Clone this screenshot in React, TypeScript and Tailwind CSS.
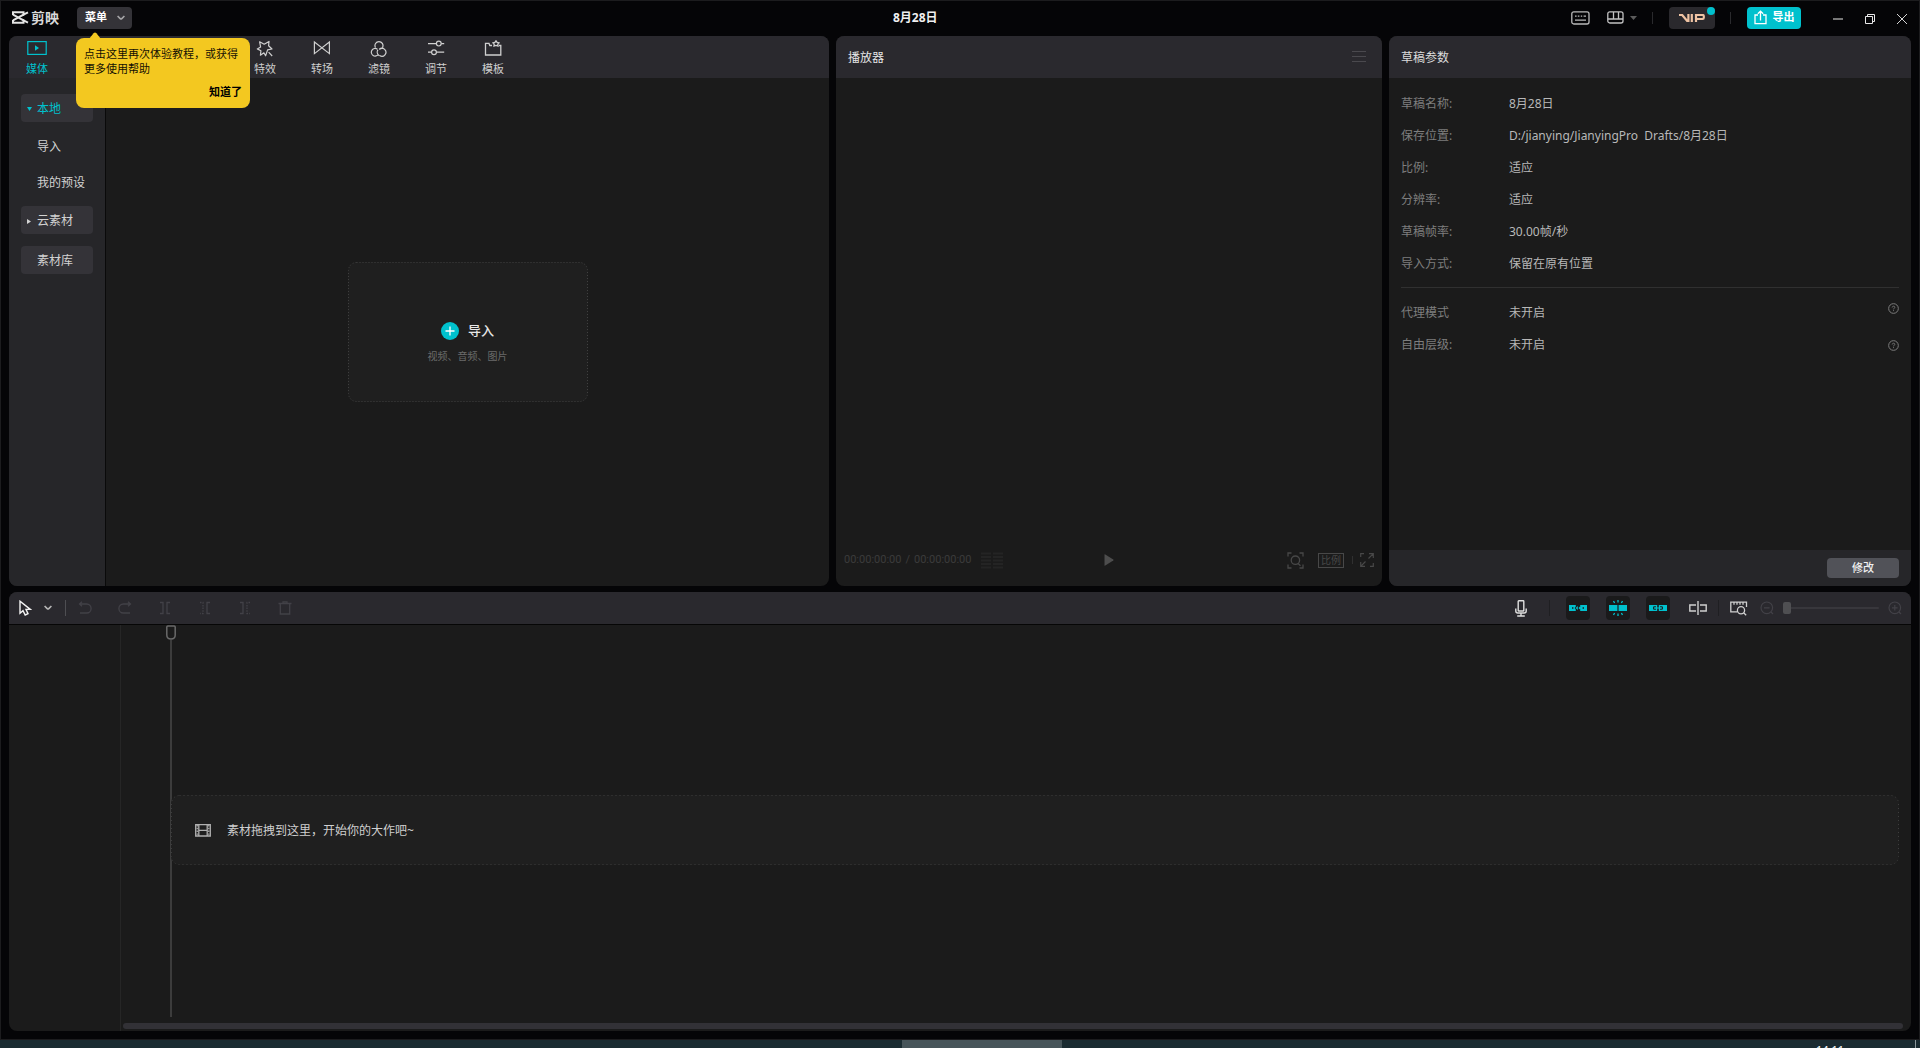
import type { ReactNode } from "react";

type IconProps = { className?: string };

const CapCutMark = () => (
  <svg width="17" height="13" viewBox="0 0 17 13" fill="none" stroke="#e4e4e4" strokeWidth="2">
    <path d="M1 4V1.2H11.5V3.6L16 1.4M1 9V11.8H11.5V9.4L16 11.6" />
    <path d="M1 3.6L12 9.6M1 9.4L12 3.4" />
  </svg>
);

const Chevron = ({ className }: IconProps) => (
  <svg className={className} width="8" height="6" viewBox="0 0 8 6" fill="none" stroke="currentColor" strokeWidth="1.6">
    <path d="M0.6 1L3.2 3.6Q4 4.3 4.8 3.6L7.4 1" />
  </svg>
);

const DottedFrame = ({ color, dash }: { color: string; dash: string }) => (
  <svg className="pointer-events-none absolute inset-0 size-full" fill="none" stroke={color} strokeDasharray={dash}>
    <rect x="0.5" y="0.5" rx="8" className="h-[calc(100%-1px)] w-[calc(100%-1px)]" />
  </svg>
);

const MediaIcon = () => (
  <svg width="20" height="16" viewBox="0 0 20 16" fill="none" stroke="currentColor" strokeWidth="1.2">
    <rect x="0.8" y="1.6" width="18.4" height="12.8" />
    <path d="M8 5.2V10.8L12 8Z" fill="currentColor" stroke="none" />
  </svg>
);
const EffectIcon = () => (
  <svg width="18" height="18" viewBox="0 0 18 18" fill="none" stroke="currentColor" strokeWidth="1.2" strokeLinejoin="round">
    <path d="M9.6 15.8L7.9 12.8L4.4 15.2L4.9 10.8L1.3 8.9L4.6 7L3.6 1.8L8.2 4.2L13 1.4L12.6 5.8L16 9L11.6 9.9L9.6 15.8Z" />
    <path d="M12.6 12.2L16.2 16" />
  </svg>
);
const TransitionIcon = () => (
  <svg width="18" height="16" viewBox="0 0 18 16" fill="none" stroke="currentColor" strokeWidth="1.2">
    <path d="M1.4 2L16.4 13.6V2L1.4 13.6Z" />
  </svg>
);
const FilterIcon = () => (
  <svg width="18" height="18" viewBox="0 0 18 18" fill="none" stroke="currentColor" strokeWidth="1.2">
    <path d="M5.4 7.4A4 4 0 1 1 12.6 7.3M7.9 9.8A4.3 4.3 0 0 0 9.3 15.7M7.4 9.2A3.8 3.8 0 1 0 8.4 14.2M9.2 9.3A4 4 0 1 1 9.6 15.6M9.2 9.3C10.6 9.1 12 8.4 12.6 7.3" />
  </svg>
);
const AdjustIcon = () => (
  <svg width="18" height="16" viewBox="0 0 18 16" fill="none" stroke="currentColor" strokeWidth="1.2">
    <path d="M1 3.6H9.3M14.3 3.6H17.2M1 12.2H4.5M9.5 12.2H17.2" />
    <circle cx="11.8" cy="3.6" r="2.4" />
    <circle cx="7" cy="12.2" r="2.4" />
  </svg>
);
const TemplateIcon = () => (
  <svg width="18" height="18" viewBox="0 0 18 18" fill="none" stroke="currentColor" strokeWidth="1.3">
    <path d="M8 5.5H5.8L5 3.4H1.5V15H16.8V5.5H15" />
    <path d="M12 0.8L13.1 2.4L15 2.8L13.8 4.3L14 6L12 5.4L10 6L10.2 4.3L9 2.8L10.9 2.4Z" />
  </svg>
);

const HelpIcon = () => (
  <svg width="11" height="11" viewBox="0 0 10 10" fill="none" stroke="#7c7c7c">
    <circle cx="5" cy="5" r="4.4" strokeWidth="0.9" />
    <path d="M3.8 4.1C3.8 2.5 6.3 2.6 6.2 4C6.1 4.8 5 4.8 5 5.8M5 6.5V7.4" strokeWidth="0.8" />
  </svg>
);

const tabs: { label: string; icon: ReactNode }[] = [
  { label: "特效", icon: <EffectIcon /> },
  { label: "转场", icon: <TransitionIcon /> },
  { label: "滤镜", icon: <FilterIcon /> },
  { label: "调节", icon: <AdjustIcon /> },
  { label: "模板", icon: <TemplateIcon /> },
];

const params = [
  ["草稿名称:", "8月28日"],
  ["保存位置:", "D:/jianying/JianyingPro  Drafts/8月28日"],
  ["比例:", "适应"],
  ["分辨率:", "适应"],
  ["草稿帧率:", "30.00帧/秒"],
  ["导入方式:", "保留在原有位置"],
];
const modes = [
  { name: "代理模式", value: "未开启", help: "self-start pt-[6px]" },
  { name: "自由层级:", value: "未开启", help: "self-center" },
];

const TitleBar = () => (
  <header className="relative z-10 flex h-[35px] shrink-0 items-center pr-3 pb-0.5 pl-[11px]">
    <div className="flex w-[65px] items-center gap-0.5">
      <CapCutMark />
      <span className="text-sm leading-4 font-bold text-[#d8d8d8]">剪映</span>
    </div>
    <div className="relative">
      <button className="flex h-[22px] w-[55px] items-center justify-between rounded bg-[#343338] pr-[7px] pl-2 text-[11px] font-bold text-white">
        菜单
        <Chevron className="text-[#a5a5a8]" />
      </button>
      <div className="absolute top-[31px] -left-px h-[70px] w-[174px] rounded-lg bg-[#f3c820] px-2 pt-2 text-[11px] leading-[15px] text-[#141003]">
        <svg className="absolute -top-[6px] left-[13px]" width="12" height="7" viewBox="0 0 12 7">
          <path d="M0 7L4.6 1.2Q6 -0.4 7.4 1.2L12 7Z" fill="#f3c820" />
        </svg>
        <p>点击这里再次体验教程，或获得更多使用帮助</p>
        <button className="mt-2 ml-auto block font-bold text-black">知道了</button>
      </div>
    </div>
    <h1 className="flex-1 pr-2 pl-[761px] text-xs leading-4 font-bold whitespace-nowrap text-[#f0f0f0]">8月28日</h1>
    <div className="flex items-center">
      <button aria-label="快捷键">
        <svg width="19" height="14" viewBox="0 0 19 14" fill="none" stroke="#b9b9b9" strokeWidth="1.3">
          <rect x="0.8" y="0.8" width="17.2" height="12.2" rx="2" />
          <path d="M4 5.2H5.6M6.8 5.2H8.4M9.8 5.2H11.2M12.6 5.2H15M4 9.2H15" />
        </svg>
      </button>
      <button aria-label="布局" className="ml-[17px] flex items-center gap-[6px]">
        <svg width="17" height="13" viewBox="0 0 17 13" fill="none" stroke="#c2c2c2" strokeWidth="1.3">
          <rect x="0.8" y="0.8" width="15.2" height="11.2" rx="2" />
          <path d="M0.8 8H16M6.5 1V8M11.5 1V8" />
        </svg>
        <svg width="7" height="4" viewBox="0 0 7 4">
          <path d="M0 0H7L3.5 4Z" fill="#5b5b5b" />
        </svg>
      </button>
      <span className="ml-[15px] h-3 w-px bg-[#2a2a2d]" />
      <button aria-label="VIP" className="relative ml-4 flex h-[22px] w-[46px] items-center justify-center rounded bg-[#2a292d]">
        <svg width="26" height="8" viewBox="0 0 26 8" fill="none" stroke="#efc3a3" strokeWidth="2.2">
          <path d="M0 1H3.2L8.2 7H9.4V0M12.8 0V8M17 8V1H23.8Q24.8 1 24.8 2.3V3.6Q24.8 5 23.6 5H18" />
        </svg>
        <span className="absolute top-0 right-0 size-2 rounded-full bg-[#00c1cd]" />
      </button>
      <span className="ml-[15px] h-3 w-px bg-[#2a2a2d]" />
      <button className="ml-4 flex h-[22px] w-[54px] items-center justify-center gap-[6px] rounded bg-[#00c1cd] text-[11px] font-bold text-white">
        <svg width="13" height="15" viewBox="0 0 13 15" fill="none" stroke="#fff" strokeWidth="1.3">
          <path d="M4 5H1V13.6H12V5H9M6.5 10.5V1.2M3.8 3.8L6.5 1.2L9.2 3.8" />
        </svg>
        导出
      </button>
      <button aria-label="最小化" className="ml-8 pt-[3px]">
        <svg width="10" height="2" viewBox="0 0 10 2">
          <path d="M0 0H10V2H0Z" fill="#777" />
        </svg>
      </button>
      <button aria-label="还原" className="ml-[22px] pt-[2px]">
        <svg width="10" height="10" viewBox="0 0 10 10" fill="none" stroke="#e8e8e8">
          <path d="M0.5 2.5H7.5V9.5H0.5ZM2.5 2.5V0.5H9.5V7.5H7.5" />
        </svg>
      </button>
      <button aria-label="关闭" className="ml-[22px] pt-[2px]">
        <svg width="10" height="10" viewBox="0 0 10 10" stroke="#d4d4d4">
          <path d="M0 0L10 10M10 0L0 10" />
        </svg>
      </button>
    </div>
  </header>
);

const MediaPanel = () => (
  <section className="flex flex-col overflow-hidden rounded-lg bg-[#1b1b1b]">
    <nav className="flex h-[42px] shrink-0 bg-[#2a292e] text-[11px] leading-4 text-[#cfcfcf]">
      <button className="mr-[171px] flex w-[57px] flex-col items-center pt-1 pr-px text-[#00c1cd]">
        <span className="flex h-[21px] items-start">
          <MediaIcon />
        </span>
        媒体
      </button>
      {tabs.map((t) => (
        <button key={t.label} className="flex w-[57px] flex-col items-center pt-1 pr-px">
          <span className="flex h-[21px] items-start">{t.icon}</span>
          {t.label}
        </button>
      ))}
    </nav>
    <div className="flex min-h-0 flex-1">
      <aside className="flex w-[97px] flex-col border-r border-[#0a0a0a] bg-[#262629] px-3 pt-4 text-xs text-[#d2d2d2]">
        <button className="flex h-7 items-center rounded bg-[#343338] pt-0.5 text-[#00c1cd]">
          <span className="flex w-4 justify-center">
            <svg width="5" height="4" viewBox="0 0 5 4">
              <path d="M0 0H5L2.5 4Z" fill="currentColor" />
            </svg>
          </span>
          本地
        </button>
        <div className="flex flex-col py-[6px]">
          <button className="h-9 pt-0.5 pl-4 text-left">导入</button>
          <button className="h-9 pt-0.5 pl-4 text-left whitespace-nowrap">我的预设</button>
        </div>
        <button className="flex h-7 items-center rounded bg-[#343338] pt-0.5">
          <span className="flex w-4 justify-center">
            <svg width="4" height="5" viewBox="0 0 4 5">
              <path d="M0 0V5L4 2.5Z" fill="currentColor" />
            </svg>
          </span>
          云素材
        </button>
        <button className="mt-3 h-7 rounded bg-[#343338] pt-0.5 pl-4 text-left">素材库</button>
      </aside>
      <div className="flex flex-1 items-center justify-center">
        <button className="relative flex h-[140px] w-60 flex-col items-center rounded-lg bg-[#1f1f1f] pt-15">
          <DottedFrame color="#404040" dash="1 2" />
          <span className="flex h-[18px] items-center gap-[9px] text-[13px] font-medium text-[#e6e6e6]">
            <svg width="18" height="18" viewBox="0 0 18 18">
              <circle cx="9" cy="9" r="9" fill="#00c1cd" />
              <path d="M4.5 9H13.5M9 4.5V13.5" stroke="#fff" strokeWidth="1.3" />
            </svg>
            导入
          </span>
          <span className="mt-2 text-[10px] leading-4 text-[#6b6b6b]">视频、音频、图片</span>
        </button>
      </div>
    </div>
  </section>
);

const PlayerPanel = () => (
  <section className="flex flex-col overflow-hidden rounded-lg bg-[#1b1b1b]">
    <div className="flex h-[42px] shrink-0 items-center justify-between bg-[#2a292e] pr-4 pl-3">
      <h2 className="pt-0.5 text-xs text-[#e6e6e6]">播放器</h2>
      <button aria-label="播放器菜单">
        <svg width="14" height="12" viewBox="0 0 14 12" stroke="#4a494e">
          <path d="M0 0.5H14M0 5.5H14M0 10.5H14" />
        </svg>
      </button>
    </div>
    <div className="flex-1" />
    <div className="grid h-[52px] grid-cols-[1fr_auto_1fr] items-center px-2 text-[#484848]">
      <div className="flex items-center font-[Roboto,sans-serif] text-[11px] text-[#3b3b3b]">
        <span>00:00:00:00</span>
        <span className="px-1">/</span>
        <span>00:00:00:00</span>
        <svg className="ml-2.5" width="22" height="17" viewBox="0 0 22 17" stroke="#242424" strokeWidth="2">
          <path d="M0 1.5H10M0 5H10M0 8.5H10M0 12H10M0 15.5H10M12 1.5H22M12 5H22M12 8.5H22M12 12H22M12 15.5H22" />
        </svg>
      </div>
      <button aria-label="播放">
        <svg width="10" height="12" viewBox="0 0 10 12">
          <path d="M0.5 0.8Q0.5 0 1.3 0.4L9.3 5.4Q10 6 9.3 6.6L1.3 11.6Q0.5 12 0.5 11.2Z" fill="#4d4d4d" />
        </svg>
      </button>
      <div className="flex items-center justify-end">
        <button aria-label="缩放">
          <svg width="17" height="17" viewBox="0 0 17 17" fill="none" stroke="currentColor" strokeWidth="1.3">
            <path d="M1 4.5V1H4.5M12.5 1H16V4.5M16 12.5V16H12.5M4.5 16H1V12.5M10.8 11.2L13.5 13.8" />
            <circle cx="8.4" cy="8.2" r="4.2" />
          </svg>
        </button>
        <button className="ml-3.5 h-[15px] w-[26px] border border-current text-center text-[10px] leading-[13px]">比例</button>
        <span className="mr-[7px] ml-2 h-2 w-px bg-[#303030]" />
        <button aria-label="全屏">
          <svg width="14" height="14" viewBox="0 0 14 14" fill="none" stroke="currentColor" strokeWidth="1.2">
            <path d="M0.7 4V0.7H4M9 0.7H13.3V5M13.3 10V13.3H10M5 13.3H0.7V9M0.7 13.3L5.5 8.5M13.3 0.7L8.5 5.5" />
          </svg>
        </button>
      </div>
    </div>
  </section>
);

const ParamsPanel = () => (
  <section className="flex flex-col overflow-hidden rounded-lg bg-[#1b1b1b]">
    <div className="flex h-[42px] shrink-0 items-center bg-[#2a292e] px-3">
      <h2 className="pt-0.5 text-xs text-[#dcdcdc]">草稿参数</h2>
    </div>
    <div className="flex-1 px-3 pt-2.5 text-xs">
      <dl>
        {params.map(([k, v]) => (
          <div key={k} className="flex h-8 items-center">
            <dt className="w-[108px] text-[#7e7e7e]">{k}</dt>
            <dd className="whitespace-pre text-[#b8b8b8]">{v}</dd>
          </div>
        ))}
      </dl>
      <hr className="mt-[7px] mb-[9px] border-[#303030]" />
      <dl>
        {modes.map((m) => (
          <div key={m.name} className="flex h-8 items-center">
            <dt className="w-[108px] text-[#7e7e7e]">{m.name}</dt>
            <dd className="flex h-full flex-1 items-center justify-between text-[#b8b8b8]">
              {m.value}
              <button aria-label={`${m.name}说明`} className={m.help}>
                <HelpIcon />
              </button>
            </dd>
          </div>
        ))}
      </dl>
    </div>
    <div className="flex h-9 shrink-0 items-center justify-end bg-[#262629] px-3">
      <button className="h-5 w-[72px] rounded bg-[#515258] text-[11px] font-medium text-[#f0f0f0]">修改</button>
    </div>
  </section>
);

const editTools: { label: string; icon: ReactNode }[] = [
  { label: "撤销", icon: <path d="M4 0.8L1.5 3L4 5.2M2 3H8.6A4.2 4.2 0 0 1 8.6 12H2" /> },
  { label: "重做", icon: <path d="M10 0.8L12.5 3L10 5.2M12 3H5.4A4.2 4.2 0 0 0 5.4 12H12" /> },
  { label: "分割", icon: <path d="M2 1.5H5V12.5H2M12 1.5H9V12.5H12" /> },
  {
    label: "向左裁剪",
    icon: (
      <>
        <path d="M12 1.5H9V12.5H12" />
        <path d="M2 1.5H5V12.5H2" strokeDasharray="1.5 1.2" />
      </>
    ),
  },
  {
    label: "向右裁剪",
    icon: (
      <>
        <path d="M2 1.5H5V12.5H2" />
        <path d="M12 1.5H9V12.5H12" strokeDasharray="1.5 1.2" />
      </>
    ),
  },
  { label: "删除", icon: <path d="M0.5 2.5H13.5M5 2.5V0.8H9V2.5M2.3 2.5V13H11.7V2.5" /> },
];

const Toggle = ({ label, children }: { label: string; children: ReactNode }) => (
  <button aria-label={label} aria-pressed="true" className="flex size-6 items-center justify-center rounded bg-[#1a1a1b]">
    <svg width="18" height="16" viewBox="0 0 18 16">
      {children}
    </svg>
  </button>
);

const Timeline = () => (
  <section className="flex min-h-0 flex-[439] flex-col overflow-hidden rounded-lg bg-[#1b1b1b]">
    <div className="flex h-[33px] shrink-0 items-center border-b border-[#060606] bg-[#2a292e] pr-[9px] pl-2.5">
      <button aria-label="选择" className="flex items-center gap-3">
        <svg width="13" height="16" viewBox="0 0 13 16" fill="none" stroke="#f2f2f2" strokeWidth="1.4">
          <path d="M1 1.2V13.2L4 10.6L6.2 15L9 13.7L7 9.4H11.3Z" />
        </svg>
        <Chevron className="text-[#b5b5b5]" />
      </button>
      <span className="ml-[13px] h-4 w-px bg-[#4e4e52]" />
      <div className="-ml-px flex">
        {editTools.map((t) => (
          <button key={t.label} aria-label={t.label} disabled className="flex w-10 justify-center text-[#424147]">
            <svg width="14" height="14" viewBox="0 0 14 14" fill="none" stroke="currentColor" strokeWidth="1.3">
              {t.icon}
            </svg>
          </button>
        ))}
      </div>
      <div className="ml-auto flex items-center">
        <button aria-label="录音">
          <svg width="12" height="17" viewBox="0 0 12 17" fill="none" stroke="#e0e0e0" strokeWidth="1.4">
            <rect x="3.2" y="0.8" width="5.6" height="10.2" rx="0.6" />
            <path d="M0.8 8.5V11Q0.8 13 2.8 13H9.2Q11.2 13 11.2 11V8.5M6 13V16M2.2 16H9.8" />
          </svg>
        </button>
        <span className="mr-4 ml-[22px] h-4 w-px bg-[#1f1f22]" />
        <div className="flex gap-4">
          <Toggle label="主轨磁吸">
            <path d="M0 5H6.8V11H0ZM11.2 5H18V11H11.2Z" fill="#00c1cd" />
            <path d="M3 8H4.4M13.6 8H15" stroke="#1a1a1b" strokeWidth="1.4" />
            <path d="M5.6 8L9 4.6V11.4Z" fill="#1a1a1b" />
            <path d="M6.6 8L8.8 6V10ZM9.4 8L11 6.4L12.4 8L11 9.6Z" fill="#00c1cd" />
          </Toggle>
          <Toggle label="自动吸附">
            <path d="M0 5H8.4V11H0ZM9.6 5H18V11H9.6Z" fill="#00c1cd" />
            <path d="M9 0V2.5M4.5 1L5.6 3M13.5 1L12.4 3M9 13.5V16M4.5 15L5.6 13M13.5 15L12.4 13" stroke="#00c1cd" strokeWidth="1.3" />
          </Toggle>
          <Toggle label="联动">
            <path d="M0 5H8.2V11H0ZM9.8 5H18V11H9.8Z" fill="#00c1cd" />
            <path d="M7 6.8H4.6V9.2H7M11 6.8H13.4V9.2H11" fill="none" stroke="#1a1a1b" />
            <path d="M6.5 8H11.5" stroke="#00c1cd" strokeWidth="1.2" />
          </Toggle>
        </div>
        <button aria-label="预览轴" className="ml-[19px]">
          <svg width="18" height="14" viewBox="0 0 18 14" fill="none" stroke="#d0d0d0" strokeWidth="1.4">
            <path d="M7 4H0.8V10H7M11 4H17.2V10H11M9 0V14" />
          </svg>
        </button>
        <span className="mr-[11px] ml-[11px] h-4 w-px bg-[#1f1f22]" />
        <button aria-label="全局预览">
          <svg width="18" height="15" viewBox="0 0 18 15" fill="none" stroke="#d0d0d0" strokeWidth="1.3">
            <path d="M7 10.8H0.8V1.2H16.5V6M4 1V3.8M7 1V3.8M10 1V3.8M13 1V3.8M13.6 11.8L16.2 14.2" />
            <circle cx="11" cy="9.2" r="3.6" />
          </svg>
        </button>
        <button aria-label="缩小" className="ml-3">
          <svg width="14" height="14" viewBox="0 0 14 14" fill="none" stroke="#424147" strokeWidth="1.2">
            <circle cx="6.8" cy="6.8" r="5.8" />
            <path d="M4 6.8H9.6M11 11L13 13" />
          </svg>
        </button>
        <input
          type="range"
          aria-label="时间线缩放"
          defaultValue={0}
          className="mr-[9px] ml-[9px] h-3 w-24 appearance-none bg-transparent [&::-webkit-slider-runnable-track]:h-0.5 [&::-webkit-slider-runnable-track]:rounded [&::-webkit-slider-runnable-track]:bg-[#38373c] [&::-webkit-slider-thumb]:-mt-[5px] [&::-webkit-slider-thumb]:h-3 [&::-webkit-slider-thumb]:w-2 [&::-webkit-slider-thumb]:appearance-none [&::-webkit-slider-thumb]:rounded-xs [&::-webkit-slider-thumb]:bg-[#4f4f52]"
        />
        <button aria-label="放大">
          <svg width="14" height="14" viewBox="0 0 14 14" fill="none" stroke="#424147" strokeWidth="1.2">
            <circle cx="6.8" cy="6.8" r="5.8" />
            <path d="M4 6.8H9.6M6.8 4V9.6M11 11L13 13" />
          </svg>
        </button>
      </div>
    </div>
    <div className="flex min-h-0 flex-1">
      <div className="w-28 shrink-0 border-r border-[#262626]" />
      <div className="flex min-w-0 flex-1 flex-col pr-2 pb-0.5 pl-0.5">
        <div className="relative flex flex-1 flex-col justify-center pt-3 pr-1 pl-12">
          <div className="absolute top-0 bottom-[6px] left-[43px] flex w-2.5 flex-col items-center">
            <svg width="10" height="15" viewBox="0 0 10 15" fill="none" stroke="#6a6a6a" strokeWidth="1.5">
              <path d="M1.8 1H8.2Q9.2 1 9.2 2V10Q9.2 14 5 14Q0.8 14 0.8 10V2Q0.8 1 1.8 1Z" />
            </svg>
            <span className="w-0.5 flex-1 bg-[#3c3c3c]" />
          </div>
          <div className="relative flex h-[70px] items-center rounded-lg bg-[#1f1f1f] pl-6 text-xs text-[#cfcfcf]">
            <DottedFrame color="#3e3e3e" dash="1 3" />
            <svg className="mr-4" width="16" height="13" viewBox="0 0 16 13" fill="none" stroke="#b0b0b0" strokeWidth="1.3">
              <path d="M0.7 0.7H15.3V12H0.7ZM3.8 0.7V12M12.2 0.7V12M3.8 6.3H12.2" />
              <path d="M2.2 1V12M13.8 1V12" strokeDasharray="1.4 1.4" />
            </svg>
            <span className="pt-0.5">素材拖拽到这里，开始你的大作吧~</span>
          </div>
        </div>
        <div className="h-[6px] rounded-full bg-[#323136]" />
      </div>
    </div>
  </section>
);

export default function App() {
  return (
    <div className="flex h-screen min-w-[1500px] flex-col overflow-hidden bg-black font-['Noto_Sans','Noto_Sans_CJK_SC',sans-serif] select-none">
      <main className="flex min-h-0 flex-1 flex-col border border-[#1c1c1e] bg-[#050507]">
        <TitleBar />
        <div className="flex min-h-0 flex-1 flex-col gap-[6px] px-2 pb-2">
          <div className="grid min-h-0 flex-[550] grid-cols-[820fr_546fr_522fr] gap-[7px]">
            <MediaPanel />
            <PlayerPanel />
            <ParamsPanel />
          </div>
          <Timeline />
        </div>
      </main>
      <footer className="flex h-2 shrink-0 justify-end overflow-hidden bg-[#1a2b31]">
        <div className="flex flex-1 justify-center pl-[147px]">
          <span className="w-40 bg-[#47555a]" />
        </div>
        <time className="w-[99px] pt-0.5 text-[11px] leading-4 text-white">14:11</time>
        <span className="mr-1 w-px bg-[#8b979b]" />
      </footer>
    </div>
  );
}
